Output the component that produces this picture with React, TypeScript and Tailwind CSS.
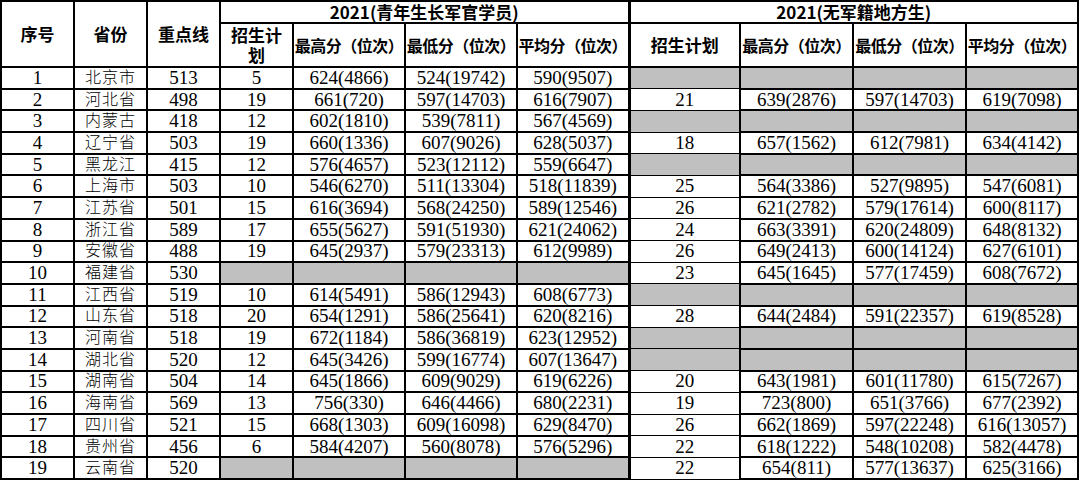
import React from "react";

type Row = {
  no: number;
  prov: string;
  line: number;
  a: [string, string, string, string] | null;
  b: [string, string, string, string] | null;
};

const rows: Row[] = [
  { no: 1, prov: "北京市", line: 513, a: ["5", "624(4866)", "524(19742)", "590(9507)"], b: null },
  { no: 2, prov: "河北省", line: 498, a: ["19", "661(720)", "597(14703)", "616(7907)"], b: ["21", "639(2876)", "597(14703)", "619(7098)"] },
  { no: 3, prov: "内蒙古", line: 418, a: ["12", "602(1810)", "539(7811)", "567(4569)"], b: null },
  { no: 4, prov: "辽宁省", line: 503, a: ["19", "660(1336)", "607(9026)", "628(5037)"], b: ["18", "657(1562)", "612(7981)", "634(4142)"] },
  { no: 5, prov: "黑龙江", line: 415, a: ["12", "576(4657)", "523(12112)", "559(6647)"], b: null },
  { no: 6, prov: "上海市", line: 503, a: ["10", "546(6270)", "511(13304)", "518(11839)"], b: ["25", "564(3386)", "527(9895)", "547(6081)"] },
  { no: 7, prov: "江苏省", line: 501, a: ["15", "616(3694)", "568(24250)", "589(12546)"], b: ["26", "621(2782)", "579(17614)", "600(8117)"] },
  { no: 8, prov: "浙江省", line: 589, a: ["17", "655(5627)", "591(51930)", "621(24062)"], b: ["24", "663(3391)", "620(24809)", "648(8132)"] },
  { no: 9, prov: "安徽省", line: 488, a: ["19", "645(2937)", "579(23313)", "612(9989)"], b: ["26", "649(2413)", "600(14124)", "627(6101)"] },
  { no: 10, prov: "福建省", line: 530, a: null, b: ["23", "645(1645)", "577(17459)", "608(7672)"] },
  { no: 11, prov: "江西省", line: 519, a: ["10", "614(5491)", "586(12943)", "608(6773)"], b: null },
  { no: 12, prov: "山东省", line: 518, a: ["20", "654(1291)", "586(25641)", "620(8216)"], b: ["28", "644(2484)", "591(22357)", "619(8528)"] },
  { no: 13, prov: "河南省", line: 518, a: ["19", "672(1184)", "586(36819)", "623(12952)"], b: null },
  { no: 14, prov: "湖北省", line: 520, a: ["12", "645(3426)", "599(16774)", "607(13647)"], b: null },
  { no: 15, prov: "湖南省", line: 504, a: ["14", "645(1866)", "609(9029)", "619(6226)"], b: ["20", "643(1981)", "601(11780)", "615(7267)"] },
  { no: 16, prov: "海南省", line: 569, a: ["13", "756(330)", "646(4466)", "680(2231)"], b: ["19", "723(800)", "651(3766)", "677(2392)"] },
  { no: 17, prov: "四川省", line: 521, a: ["15", "668(1303)", "609(16098)", "629(8470)"], b: ["26", "662(1869)", "597(22248)", "616(13057)"] },
  { no: 18, prov: "贵州省", line: 456, a: ["6", "584(4207)", "560(8078)", "576(5296)"], b: ["22", "618(1222)", "548(10208)", "582(4478)"] },
  { no: 19, prov: "云南省", line: 520, a: null, b: ["22", "654(811)", "577(13637)", "625(3166)"] },
];

const widths = [73, 73, 73, 73, 112, 112, 112, 111, 113, 113, 112];

const cell = "border-2 border-black p-0 text-center";
const gray = "bg-[#c0c0c0]";
const head = "border-2 border-black p-0 text-center font-bold text-[17px] leading-[20px]";
const colHead = "whitespace-nowrap text-[16px] tracking-[-0.5px]";

export default function App() {
  return (
    <div className="h-[482px] w-[1080px] overflow-hidden bg-white text-black">
      <table className="w-[1078px] table-fixed border-collapse font-['Noto_Sans_CJK_SC',sans-serif]">
        <colgroup>
          {widths.map((w, i) => (
            <col key={i} style={{ width: w }} />
          ))}
        </colgroup>
        <thead>
          <tr className="h-[22px]">
            <th rowSpan={2} className={head}>序号</th>
            <th rowSpan={2} className={head}>省份</th>
            <th rowSpan={2} className={head}>重点线</th>
            <th colSpan={4} className={head}>2021(青年生长军官学员)</th>
            <th colSpan={4} className={`${head} border-l-[3px]`}>2021(无军籍地方生)</th>
          </tr>
          <tr className="h-[44px]">
            <th className={head}>
              <div className="leading-[20px]">招生计</div>
              <div className="leading-[20px]">划</div>
            </th>
            <th className={head}><span className={colHead}>最高分（位次）</span></th>
            <th className={head}><span className={colHead}>最低分（位次）</span></th>
            <th className={head}><span className={colHead}>平均分（位次）</span></th>
            <th className={`${head} border-l-[3px]`}>招生计划</th>
            <th className={head}><span className={colHead}>最高分（位次）</span></th>
            <th className={head}><span className={colHead}>最低分（位次）</span></th>
            <th className={head}><span className={colHead}>平均分（位次）</span></th>
          </tr>
        </thead>
        <tbody className="font-['Liberation_Serif','Noto_Sans_CJK_SC',serif] text-[19px] leading-[18px] font-light">
          {rows.map((r) => (
            <tr key={r.no} className="h-[21.7px]">
              <td className={cell}>{r.no}</td>
              <td className={`${cell} text-[16px] tracking-[1px]`}>{r.prov}</td>
              <td className={cell}>{r.line}</td>
              {r.a
                ? r.a.map((v, i) => (
                    <td key={i} className={cell}>{v}</td>
                  ))
                : [0, 1, 2, 3].map((i) => <td key={i} className={`${cell} ${gray}`} />)}
              <td className={`border-y border-r-2 border-l-[3px] border-black p-0 text-center ${r.b ? "" : gray}`}>
                {r.b ? r.b[0] : ""}
              </td>
              {r.b
                ? r.b.slice(1).map((v, i) => (
                    <td key={i} className={cell}>{v}</td>
                  ))
                : [0, 1, 2].map((i) => <td key={i} className={`${cell} ${gray}`} />)}
            </tr>
          ))}
        </tbody>
      </table>
    </div>
  );
}
